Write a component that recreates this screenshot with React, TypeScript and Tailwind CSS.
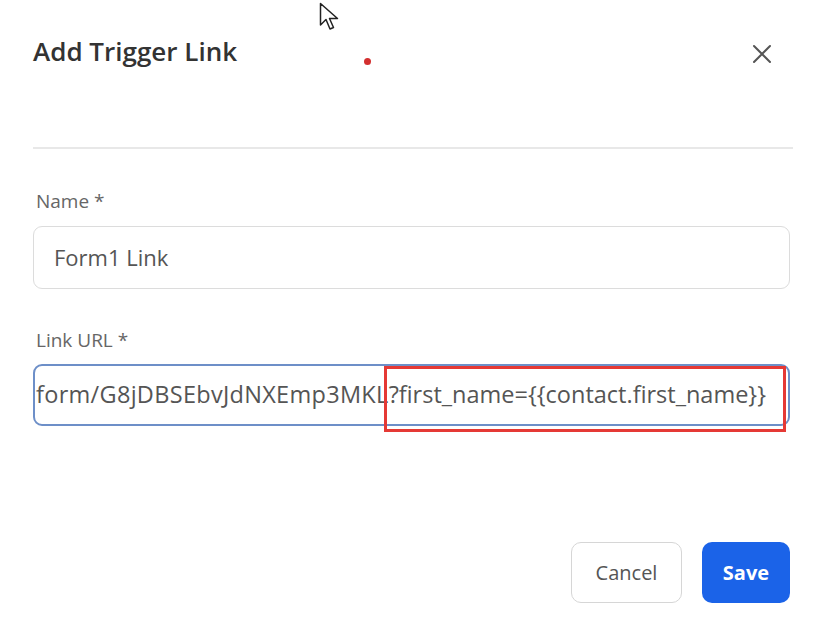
import React from "react";

export default function App() {
  return (
    <div
      className="relative w-[816px] h-[618px] bg-white overflow-hidden"
      style={{ fontFamily: '"Open Sans", "Noto Sans", sans-serif' }}
    >
      <div className="pl-[33px] pr-[23px]">
        {/* Header */}
        <div className="flex items-center justify-between h-[32px] mt-[35px]">
          <h1 className="text-[26px] leading-[32px] font-semibold text-[#333]">Add Trigger Link</h1>
          <button className="w-[24px] h-[24px] flex items-center justify-center mr-[19px] mt-[5px]">
            <svg width="20" height="20" viewBox="0 0 20 20" fill="none" stroke="#555" strokeWidth="2" strokeLinecap="round">
              <path d="M2 2 L18 18 M18 2 L2 18" />
            </svg>
          </button>
        </div>

        <div className="mt-[80px] h-[2px] w-[760px] bg-[#e8e8e8]" />

        {/* Name */}
        <div className="mt-[40px]">
          <label className="block pl-[3px] text-[19px] leading-[24px] text-[#666]">Name *</label>
          <div className="mt-[13px] w-[757px] h-[63px] rounded-[9px] border border-[#dcdcdc] flex items-center px-[20px]">
            <span className="text-[22px] text-[#555]">Form1 Link</span>
          </div>
        </div>

        {/* Link URL */}
        <div className="mt-[39px]">
          <label className="block pl-[3px] text-[19px] leading-[24px] text-[#666]">Link URL *</label>
          <div className="mt-[12px] w-[757px] h-[62px] rounded-[9px] border-2 border-[#6d8fc8] flex items-center justify-end overflow-hidden pr-[22px]">
            <span className="text-[23.5px] text-[#555] whitespace-nowrap">
              <span className="tracking-[0.3px]">form/G8jDBSEbvJdNXEmp3MKL</span>
              ?first_name={"{{contact.first_name}}"}
            </span>
          </div>
        </div>

        {/* Buttons */}
        <div className="mt-[116px] w-[757px] flex justify-end gap-[20px]">
          <button className="w-[111px] h-[61px] rounded-[10px] border border-[#d6d6d6] bg-white text-[20px] text-[#555]">
            Cancel
          </button>
          <button className="w-[88px] h-[61px] rounded-[10px] bg-[#1b63e8] text-[20px] font-bold text-white">
            Save
          </button>
        </div>
      </div>

      {/* Red highlight box */}
      <div className="absolute left-[384px] top-[366px] w-[402px] h-[66px] border-[3px] border-[#e53935]" />

      {/* Red dot */}
      <div className="absolute left-[364px] top-[58px] w-[7px] h-[7px] rounded-full bg-[#d32f2f]" />

      {/* Cursor */}
      <svg className="absolute left-[319px] top-[2px]" width="24" height="32" viewBox="0 0 24 32">
        <path
          d="M1.5 1.5 L1.5 23 L7 17.5 L11 27 L14.5 25.5 L10.5 16.5 L18.5 16.5 Z"
          fill="white"
          stroke="#222"
          strokeWidth="1.5"
          strokeLinejoin="round"
        />
      </svg>
    </div>
  );
}
